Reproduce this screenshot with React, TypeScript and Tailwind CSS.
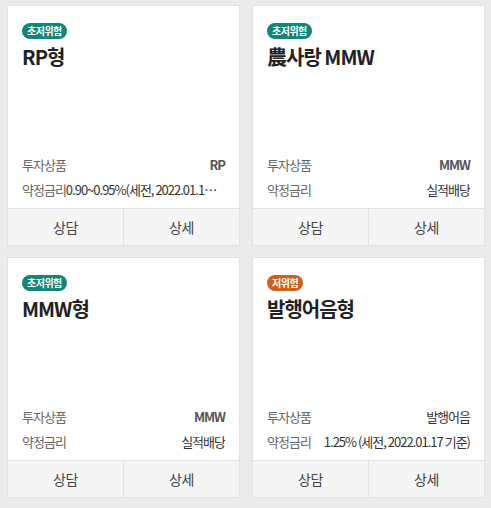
import React from "react";

type Card = {
  risk: string;
  riskColor: "teal" | "orange";
  title: string;
  product: string;
  productBold?: boolean;
  rate: string;
  rateMode: "truncate" | "right";
};

const cards: Card[] = [
  { risk: "초저위험", riskColor: "teal", title: "RP형", product: "RP", productBold: true, rate: "0.90~0.95%(세전, 2022.01.17 기준)", rateMode: "truncate" },
  { risk: "초저위험", riskColor: "teal", title: "農사랑 MMW", product: "MMW", productBold: true, rate: "실적배당", rateMode: "right" },
  { risk: "초저위험", riskColor: "teal", title: "MMW형", product: "MMW", productBold: true, rate: "실적배당", rateMode: "right" },
  { risk: "저위험", riskColor: "orange", title: "발행어음형", product: "발행어음", rate: "1.25% (세전, 2022.01.17 기준)", rateMode: "right" },
];

function ProductCard({ c }: { c: Card }) {
  return (
    <div className="flex h-[241px] flex-col border border-[#e2e2e4] bg-white">
      <div className="flex flex-1 flex-col px-[14px] pt-[17px]">
        <div className="flex">
          <span
            className={
              "flex h-[16px] items-center rounded-full px-[5px] text-[10px] font-bold leading-none tracking-[-0.5px] text-white " +
              (c.riskColor === "teal" ? "bg-[#138677]" : "bg-[#d2601a]")
            }
          >
            {c.risk}
          </span>
        </div>
        <div className="mt-[4px] text-[20px] font-bold leading-[28px] tracking-[-1px] text-[#222]">
          {c.title}
        </div>
        <div className="mt-auto pb-[6px] text-[13px] tracking-[-1px] text-[#666]">
          <div className="flex h-[25px] items-center justify-between">
            <span>투자상품</span>
            <span className={c.productBold ? "font-semibold text-[#555]" : "text-[#333]"}>{c.product}</span>
          </div>
          <div className="flex h-[25px] items-center">
            <span className="shrink-0">약정금리</span>
            {c.rateMode === "truncate" ? (
              <span className="min-w-0 flex-1 truncate pr-[6px] text-[#333]">{c.rate}</span>
            ) : (
              <span className="min-w-0 flex-1 truncate text-right text-[#333]">{c.rate}</span>
            )}
          </div>
        </div>
      </div>
      <div className="flex h-[37px] border-t border-[#e2e2e4] bg-[#f5f5f6] text-[14px] tracking-[-0.5px] text-[#444]">
        <div className="flex flex-1 items-center justify-center border-r border-[#e2e2e4]">상담</div>
        <div className="flex flex-1 items-center justify-center">상세</div>
      </div>
    </div>
  );
}

export default function App() {
  return (
    <div
      className="min-h-[508px] w-[491px] bg-[#ebebed] pl-[7px] pr-[6px] pt-[5px]"
      style={{ fontFamily: '"Noto Sans CJK KR", "Noto Sans", sans-serif' }}
    >
      <div className="grid grid-cols-2 gap-x-[12px] gap-y-[11px]">
        {cards.map((c, i) => (
          <ProductCard key={i} c={c} />
        ))}
      </div>
    </div>
  );
}
